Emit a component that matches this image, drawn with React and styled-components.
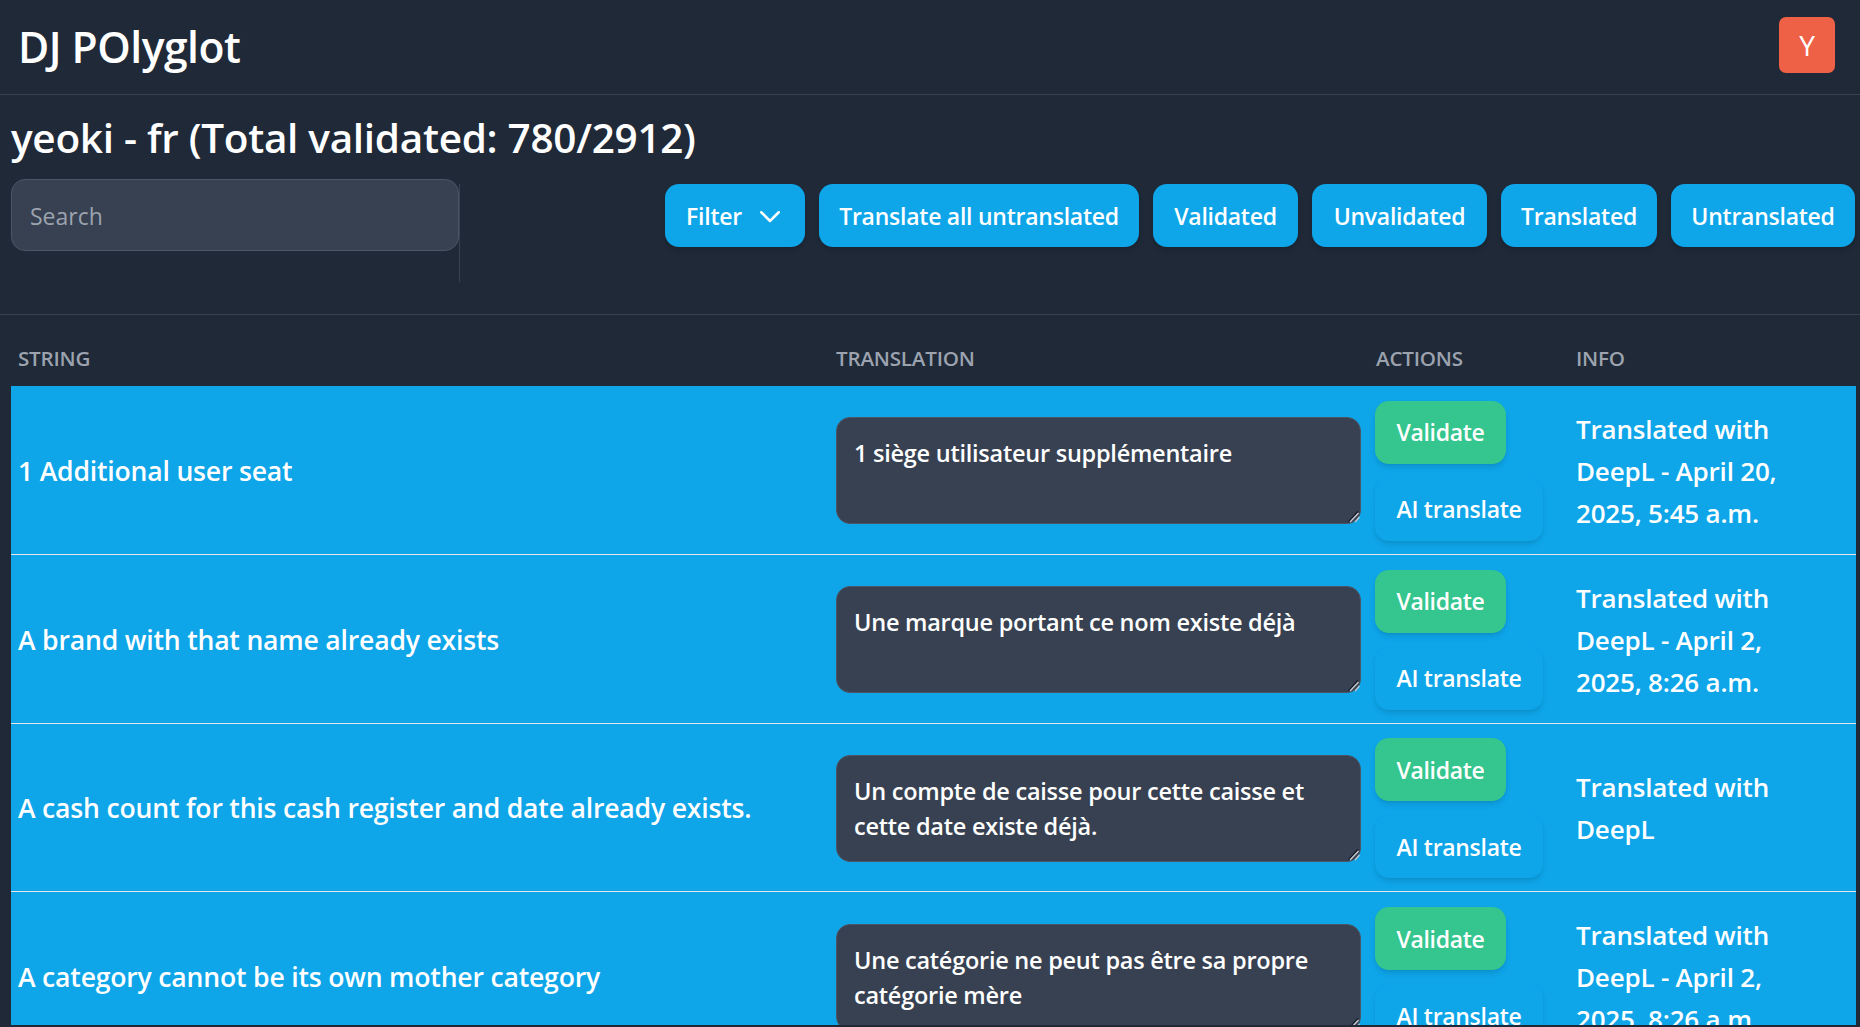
import React from "react";
import styled, { createGlobalStyle } from "styled-components";

const Global = createGlobalStyle`
  html, body { margin: 0; padding: 0; height: 100%; background: #1f2937; overflow: hidden; }
  * { box-sizing: border-box; }
  body { font-family: "Open Sans", "Noto Sans", sans-serif; color: #fff; }
`;
const Page = styled.div`
  height: 1025px; overflow: hidden; background: #1f2937;
`;
const Navbar = styled.header`
  height: 95px; display: flex; align-items: center; justify-content: space-between;
  padding: 0 25px 4px 18px; border-bottom: 1px solid #374151;
`;
const Brand = styled.div`
  font-size: 42.6px; font-weight: 600; letter-spacing: -0.5px; line-height: 1; padding-top: 3px;
`;
const Avatar = styled.div`
  width: 56px; height: 56px; border-radius: 7px; background: #ee6146; display: flex;
  align-items: center; justify-content: center; font-size: 28px; font-weight: 400;
`;
const Main = styled.main`
  padding: 0 4px 0 11px;
`;
const Heading = styled.h1`
  margin: 0; height: 84px; display: flex; align-items: center; padding-top: 1px;
  font-size: 40.5px; font-weight: 600; letter-spacing: -0.3px;
`;
const Toolbar = styled.div`
  display: flex; justify-content: space-between; align-items: flex-start;
  height: 136px; margin: 0 -4px 0 -11px; padding: 0 5px 0 11px;
  border-bottom: 1px solid #374151;
`;
const SearchColumn = styled.div`
  width: 449px; height: 98px; margin-top: 5px; border-right: 1px solid #374151;
`;
const SearchInput = styled.input`
  display: block; width: 448px; height: 72px; margin-top: -5px; padding: 2px 18px 0;
  background: #374151; border: 1px solid #4b5563; border-radius: 14px; color: #fff;
  font: 400 23px "Open Sans", sans-serif; outline: none;
  &::placeholder { color: #9ca3af; opacity: 1; }
`;
const ButtonGroup = styled.div`
  display: flex; gap: 14px; margin-top: 5px;
`;
const FilterButton = styled.button`
  height: 63px; padding: 0 21px; display: inline-flex; align-items: center; justify-content: center;
  gap: ${p => p.$gap || 0}px; border: 0; border-radius: 14px; background: #0ea5e9; color: #fff;
  font: 600 23px "Open Sans", sans-serif; letter-spacing: -0.25px; white-space: nowrap;
  width: ${p => p.$w}px;
  box-shadow: 0 4px 6px -1px rgba(0,0,0,.1), 0 2px 4px -2px rgba(0,0,0,.1);
`;
const ChevronIcon = styled.svg`
  flex: none; width: 30px; height: 30px; margin-right: -1px;
`;
const TableHead = styled.div`
  display: grid; grid-template-columns: 818px 540px 200px 1fr; height: 71px; align-items: end;
  padding-bottom: 14px;
`;
const HeadCell = styled.div`
  padding-left: 7px; font-size: 20.6px; font-weight: 600; color: #9ca3af; text-transform: uppercase;
  letter-spacing: -0.2px;
`;
const Row = styled.div`
  display: grid; grid-template-columns: 818px 540px 200px 1fr; align-items: center;
  height: 168.8px; padding-top: 2px; background: #0ea5e9; border-bottom: 1px solid #e5e7eb;
  &:first-of-type { height: 169.3px; border-top: 1px solid #374151; }
`;
const StringCell = styled.div`
  padding-left: 7px; font-size: 26.6px; font-weight: 600; letter-spacing: -0.2px;
`;
const TranslationCell = styled.div`
  margin-left: 7px; position: relative; width: 525px;
`;
const TranslationInput = styled.textarea`
  display: block; width: 525px; height: 107px; padding: 18px 17px; resize: none;
  background: #374151; border: 1px solid #4b5563; border-radius: 14px; color: #fff;
  font: 600 23.5px/35.5px "Open Sans", sans-serif; letter-spacing: -0.25px; outline: none; overflow: hidden;
`;
const ResizeGrip = styled.svg`
  position: absolute; right: 1px; bottom: 1px; width: 14px; height: 14px; pointer-events: none;
`;
const ActionsCell = styled.div`
  padding-left: 6px; display: flex; flex-direction: column; align-items: flex-start; gap: 14px;
`;
const ActionButton = styled.button`
  height: 63px; width: ${p => p.$w}px; border: 0; border-radius: 14px; padding: 0;
  background: ${p => p.$green ? "#34c68e" : "#0ea5e9"}; color: #fff;
  font: 600 23px "Open Sans", sans-serif; letter-spacing: -0.3px;
  box-shadow: 0 4px 6px -1px rgba(0,0,0,.1), 0 2px 4px -2px rgba(0,0,0,.1);
`;
const InfoCell = styled.div`
  padding-left: 7px; width: 255px; font-size: 26px; line-height: 42px; font-weight: 600; letter-spacing: -0.2px;
`;

const rows = [
  ["1 Additional user seat", "1 siège utilisateur supplémentaire", "Translated with DeepL - April 20, 2025, 5:45 a.m."],
  ["A brand with that name already exists", "Une marque portant ce nom existe déjà", "Translated with DeepL - April 2, 2025, 8:26 a.m."],
  ["A cash count for this cash register and date already exists.", "Un compte de caisse pour cette caisse et cette date existe déjà.", "Translated with DeepL"],
  ["A category cannot be its own mother category", "Une catégorie ne peut pas être sa propre catégorie mère", "Translated with DeepL - April 2, 2025, 8:26 a.m."],
];

export default function App() {
  return (
    <Page>
      <Global />
      <Navbar>
        <Brand>DJ POlyglot</Brand>
        <Avatar>Y</Avatar>
      </Navbar>
      <Main>
        <Heading>yeoki - fr (Total validated: 780/2912)</Heading>
        <Toolbar>
          <SearchColumn><SearchInput placeholder="Search" /></SearchColumn>
          <ButtonGroup>
            <FilterButton $w={140} $gap={13}>
              Filter
              <ChevronIcon viewBox="0 0 24 24" fill="none" stroke="currentColor" strokeWidth="2" strokeLinecap="round" strokeLinejoin="round"><path d="M5 9l7 7 7-7" /></ChevronIcon>
            </FilterButton>
            <FilterButton $w={320}>Translate all untranslated</FilterButton>
            <FilterButton $w={145}>Validated</FilterButton>
            <FilterButton $w={175}>Unvalidated</FilterButton>
            <FilterButton $w={156}>Translated</FilterButton>
            <FilterButton $w={184}>Untranslated</FilterButton>
          </ButtonGroup>
        </Toolbar>
        <TableHead>
          <HeadCell>String</HeadCell>
          <HeadCell>Translation</HeadCell>
          <HeadCell>Actions</HeadCell>
          <HeadCell>Info</HeadCell>
        </TableHead>
        {rows.map(([s, t, i]) => (
          <Row key={s}>
            <StringCell>{s}</StringCell>
            <TranslationCell>
              <TranslationInput defaultValue={t} />
              <ResizeGrip viewBox="0 0 14 14" fill="none" strokeLinecap="square">
                <path d="M3 12.5L11.5 3" stroke="#111827" strokeWidth="1.4" />
                <path d="M4.5 12.5L12 4.5" stroke="#c4c8ce" strokeWidth="1.5" />
                <path d="M9.5 12.5L13 8.5" stroke="#c4c8ce" strokeWidth="1.3" />
              </ResizeGrip>
            </TranslationCell>
            <ActionsCell>
              <ActionButton $green $w={131}>Validate</ActionButton>
              <ActionButton $w={168}>AI translate</ActionButton>
            </ActionsCell>
            <InfoCell>{i}</InfoCell>
          </Row>
        ))}
      </Main>
    </Page>
  );
}
